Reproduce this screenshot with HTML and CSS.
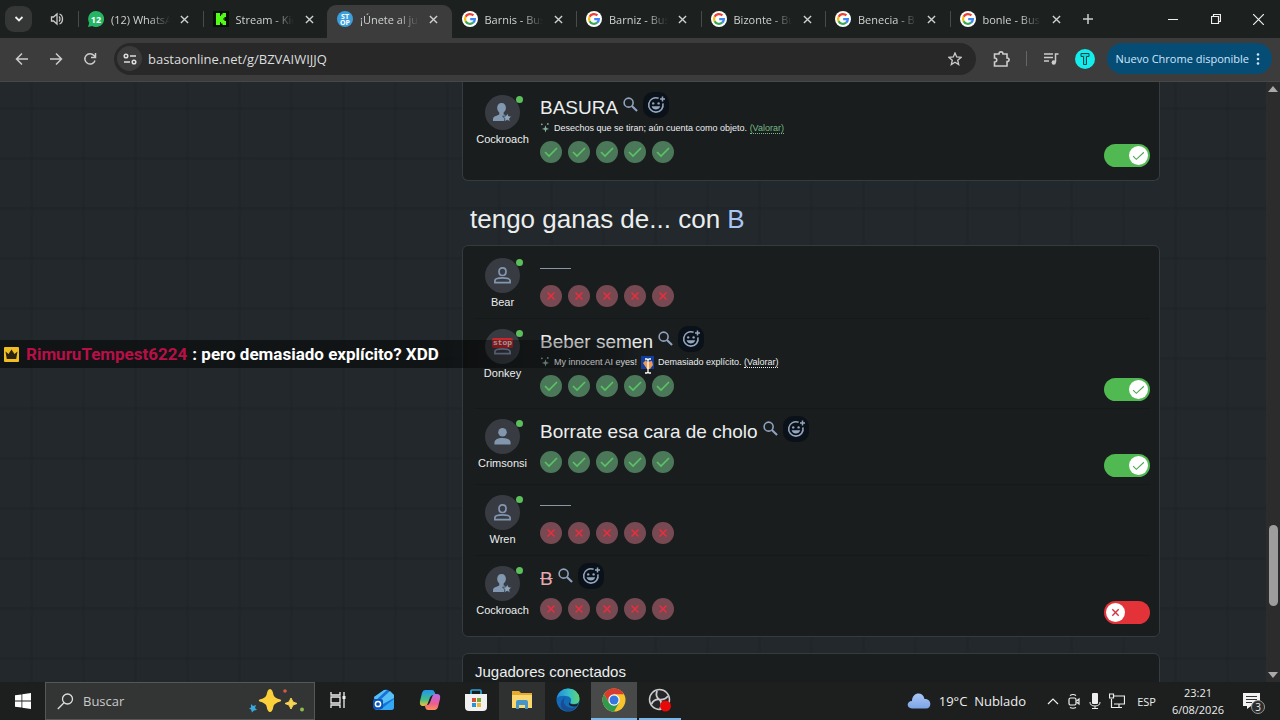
FILE: index.html
```
<!DOCTYPE html>
<html lang="es">
<head>
    <meta charset="UTF-8">
    <meta name="viewport" content="width=device-width, initial-scale=1.0">
    <link rel="stylesheet" href="styles.css">
    <title>¡Únete al juego!</title>
</head>
<body>
    <svg class="sprite" aria-hidden="true">
        <symbol id="close" viewBox="0 0 10 10"><path d="M1 1l8 8M9 1l-8 8" stroke="currentColor" stroke-width="1.5" fill="none"/></symbol>
        <symbol id="google" viewBox="0 0 16 16">
            <circle cx="8" cy="8" r="8" fill="#fff"/>
            <g fill="none" stroke-width="2.2">
                <path d="M11.4 4.4A4.9 4.9 0 0 0 3.6 5.8" stroke="#ea4335"/>
                <path d="M3.6 5.8a4.9 4.9 0 0 0 0 4.4" stroke="#fbbc05"/>
                <path d="M3.6 10.2a4.9 4.9 0 0 0 7.5 1.5" stroke="#34a853"/>
                <path d="M11.1 11.7A4.9 4.9 0 0 0 12.9 8.1H8.2" stroke="#4285f4"/>
            </g>
        </symbol>
        <symbol id="vote-yes" viewBox="0 0 22 22"><circle cx="11" cy="11" r="11" fill="#4b7859"/><path d="M5 11l4 4 8-8" fill="none" stroke="#5bc464" stroke-width="1.6"/></symbol>
        <symbol id="vote-no" viewBox="0 0 22 22"><circle cx="11" cy="11" r="11" fill="#774952"/><path d="M7.5 7.5l7 7M14.5 7.5l-7 7" fill="none" stroke="#e52f3c" stroke-width="1.7"/></symbol>
        <symbol id="search" viewBox="0 0 16 16"><circle cx="6" cy="6" r="4.8" fill="none" stroke="currentColor" stroke-width="1.7"/><path d="M9.500 9.500l5.500 5.500" stroke="currentColor" stroke-width="2.200"/></symbol>
        <symbol id="react" viewBox="0 0 20 20">
            <path d="M12.6 3.3A7.2 7.2 0 1 0 16.9 8.4" fill="none" stroke="currentColor" stroke-width="1.6"/>
            <path d="M16.500 1.500v5M14 4h5" stroke="currentColor" stroke-width="1.5"/>
            <circle cx="7.2" cy="8.4" r="1.2" fill="currentColor"/><circle cx="12.6" cy="8.4" r="1.2" fill="currentColor"/>
            <path d="M5.6 11.2h8.6c-.7 2.3-2.3 3.3-4.3 3.3s-3.6-1-4.3-3.3z" fill="currentColor"/>
        </symbol>
        <symbol id="sparkle" viewBox="0 0 12 12"><path d="M6 3l1 3 3 1-3 1-1 3-1-3-3-1 3-1z" fill="currentColor"/><circle cx="2" cy="2" r="1" fill="currentColor"/><circle cx="8.500" cy="1.500" r="1" fill="currentColor"/></symbol>
        <symbol id="user-outline" viewBox="0 0 20 20"><g fill="none" stroke="#8296b3" stroke-width="1.8"><path d="M10 2c2.300 0 3.700 1.600 3.700 3.800S12.300 10 10 10 6.300 8 6.300 5.800 7.700 2 10 2z"/><path d="M2 17.500v-2c0-2 4-3 8-3s8 1 8 3v2z"/></g></symbol>
        <symbol id="user-solid" viewBox="0 0 20 20"><g fill="#8296ad"><circle cx="10" cy="5.500" r="4.500"/><path d="M1.500 18.500v-2c0-3 3-5 8.500-5s8.500 2 8.500 5v2z"/></g></symbol>
        <symbol id="user-star" viewBox="0 0 20 20"><path d="M9 0c3 0 4.600 2.200 4.600 5 0 2-1 4-2.400 5v2l2.800 1-1 6H0V17c0-3 3.500-3.500 6.600-5v-2C5.400 9 4.400 7 4.400 5 4.400 2.200 6 0 9 0z" fill="#8198b0"/><path d="M15 10.500l1.500 3.100 3.400.4-2.500 2.300.7 3.500-3.100-1.700-3.100 1.700.7-3.500-2.500-2.300 3.400-.4z" fill="#8da6bc" stroke="#383c42" stroke-width=".9"/></symbol>
    </svg>

    <header class="tab-bar">
        <div class="tab-tools">
            <button class="tab-search" aria-label="Buscar pestañas"><svg width="10" height="10" viewBox="0 0 10 10"><path d="M1.500 3L5 6.500 8.500 3" fill="none" stroke="#eee" stroke-width="1.800"/></svg></button>
            <svg class="speaker" width="14" height="14" viewBox="0 0 14 14"><g fill="none" stroke="#ccc" stroke-width="1.300"><path d="M1.500 5v4h2l3.500 3V2L3.500 5z"/><path d="M9 4.500c1.300 1 1.300 4 0 5M9.500 2c4 1.500 4 8.500 0 10"/></g></svg>
        </div>
        <nav class="tabs">
            <div class="tab"><svg class="favicon" viewBox="0 0 16 16"><path d="M8 0a8 8 0 1 1-3.800 15L0 16l1.200-4A8 8 0 0 1 8 0z" fill="#25b565"/><text x="8" y="11.500" class="badge-text">12</text></svg><a href="#">(12) WhatsA</a><button class="tab-close" aria-label="Cerrar"><svg><use href="#close"/></svg></button></div>
            <div class="tab"><svg class="favicon" viewBox="0 0 16 16"><path d="M0 0h16v16H0z" fill="#071007"/><path d="M3 2h4v3h1V3.500h1.500V2H13v4h-1.500v1.500H10v1h1.500V10H13v4H9.500v-1.500H8V11H7v3H3z" fill="#53fc18"/></svg><a href="#">Stream - Kic</a><button class="tab-close" aria-label="Cerrar"><svg><use href="#close"/></svg></button></div>
            <div class="tab active"><svg class="favicon" viewBox="0 0 16 16"><circle cx="8" cy="8" r="8" fill="#3c9fdd"/><text x="8" y="7.500" class="stop-text">ST</text><text x="8" y="14" class="stop-text">OP</text></svg><a href="#">¡Únete al ju</a><button class="tab-close" aria-label="Cerrar"><svg><use href="#close"/></svg></button></div>
            <div class="tab"><svg class="favicon"><use href="#google"/></svg><a href="#">Barnis - Bus</a><button class="tab-close" aria-label="Cerrar"><svg><use href="#close"/></svg></button></div>
            <div class="tab"><svg class="favicon"><use href="#google"/></svg><a href="#">Barniz - Bus</a><button class="tab-close" aria-label="Cerrar"><svg><use href="#close"/></svg></button></div>
            <div class="tab"><svg class="favicon"><use href="#google"/></svg><a href="#">Bizonte - Bu</a><button class="tab-close" aria-label="Cerrar"><svg><use href="#close"/></svg></button></div>
            <div class="tab"><svg class="favicon"><use href="#google"/></svg><a href="#">Benecia - B</a><button class="tab-close" aria-label="Cerrar"><svg><use href="#close"/></svg></button></div>
            <div class="tab"><svg class="favicon"><use href="#google"/></svg><a href="#">bonle - Bus</a><button class="tab-close" aria-label="Cerrar"><svg><use href="#close"/></svg></button></div>
        </nav>
        <div class="window-tools">
            <button class="new-tab" aria-label="Nueva pestaña"><svg width="10" height="10" viewBox="0 0 10 10"><path d="M5 0v10M0 5h10" stroke="#ccc" stroke-width="1.500"/></svg></button>
            <button class="window-button" aria-label="Minimizar"><svg width="10" height="10" viewBox="0 0 10 10"><path d="M0 5.500h10" stroke="#eee"/></svg></button>
            <button class="window-button" aria-label="Restaurar"><svg width="10" height="10" viewBox="0 0 10 10"><path d="M.5 2.500h7v7h-7zM2.500 2.500v-2h7v7h-2" fill="none" stroke="#eee" stroke-width="1.200"/></svg></button>
            <button class="window-button" aria-label="Cerrar ventana"><svg width="11" height="11" viewBox="0 0 10 10"><path d="M0 0l10 10M10 0L0 10" stroke="#eee" stroke-width="1.100"/></svg></button>
        </div>
    </header>

    <div class="toolbar">
        <button class="nav-button" aria-label="Atrás"><svg width="14" height="14" viewBox="0 0 14 14"><path d="M13 7H2M7 1.500L1.500 7 7 12.500" fill="none" stroke="#ccc" stroke-width="1.500"/></svg></button>
        <button class="nav-button" aria-label="Adelante"><svg width="14" height="14" viewBox="0 0 14 14"><path d="M1 7h11M7 1.500L12.500 7 7 12.500" fill="none" stroke="#ccc" stroke-width="1.500"/></svg></button>
        <button class="nav-button" aria-label="Recargar"><svg width="14" height="14" viewBox="0 0 14 14"><path d="M12 8.500A5.200 5.200 0 1 1 11 3.500l1.300 1.500M12.500 1v4.500H8" fill="none" stroke="#ccc" stroke-width="1.500"/></svg></button>
        <div class="address-bar">
            <button class="site-info" aria-label="Información del sitio"><svg width="14" height="14" viewBox="0 0 14 14"><g fill="none" stroke="#ddd" stroke-width="1.500"><circle cx="3" cy="4" r="1.800"/><path d="M7 4h6M1 10h6"/><circle cx="11" cy="10" r="1.800"/></g></svg></button>
            <input class="address" type="text" aria-label="Dirección" value="bastaonline.net/g/BZVAIWIJJQ">
            <button class="star" aria-label="Favorito"><svg width="14" height="14" viewBox="0 0 14 14"><path d="M7 1l1.700 4 4.300.4-3.300 2.800 1 4.300L7 10.200l-3.700 2.300 1-4.300L1 5.400 5.300 5z" fill="none" stroke="#ccc" stroke-width="1.300"/></svg></button>
        </div>
        <div class="extensions">
            <button class="plain" aria-label="Extensiones"><svg width="18" height="18" viewBox="0 0 18 18"><path d="M2.500 4H7c0-2.800 4-2.800 4 0h4v4c2.800 0 2.800 3.500 0 3.500V16H2.500v-4c3 0 3-4 0-4z" fill="none" stroke="#ccc" stroke-width="1.600"/></svg></button>
            <span class="divider"></span>
            <button class="plain" aria-label="Multimedia"><svg width="16" height="14" viewBox="0 0 16 14"><path d="M1 2h9M1 5.500h9M1 9h5M15.500 2H12.500v8" fill="none" stroke="#ccc" stroke-width="1.500"/><circle cx="10.800" cy="10.500" r="2.200" fill="#ccc"/></svg></button>
            <button class="plain profile" aria-label="Perfil"><svg width="20" height="20" viewBox="0 0 20 20"><circle cx="10" cy="10" r="10" fill="#15ecec"/><path d="M6 4.500h8v3h-2.500v8h-3v-8H6z" fill="#19d4d6" stroke="#08494d" stroke-width="1"/></svg></button>
            <button class="update">Nuevo Chrome disponible <svg width="4" height="12" viewBox="0 0 4 12"><circle cx="2" cy="1.500" r="1.300"/><circle cx="2" cy="6" r="1.300"/><circle cx="2" cy="10.500" r="1.300"/></svg></button>
        </div>
    </div>

    <div class="page">
        <main class="game">
            <div class="results">
                <section class="card card-first">
                    <div class="row">
                        <div class="player"><span class="avatar"><svg><use href="#user-star"/></svg></span><span>Cockroach</span></div>
                        <div class="answer">
                            <div class="word"><span>BASURA</span><a href="#" class="lookup" aria-label="Buscar"><svg><use href="#search"/></svg></a><button class="react" aria-label="Reaccionar"><svg><use href="#react"/></svg></button></div>
                            <p class="comment"><svg><use href="#sparkle"/></svg><span>Desechos que se tiran; aún cuenta como objeto. <a href="#" class="rate">(Valorar)</a></span></p>
                            <div class="votes"><svg><use href="#vote-yes"/></svg><svg><use href="#vote-yes"/></svg><svg><use href="#vote-yes"/></svg><svg><use href="#vote-yes"/></svg><svg><use href="#vote-yes"/></svg></div>
                        </div>
                        <label class="toggle"><input type="checkbox" aria-label="Aceptar BASURA" checked><svg viewBox="0 0 12 12"><path d="M1 6.500l3 3L11 3"/></svg></label>
                    </div>
                </section>

                <h2>tengo ganas de... con <span>B</span></h2>

                <section class="card">
                    <div class="row">
                        <div class="player"><span class="avatar"><svg><use href="#user-outline"/></svg></span><span>Bear</span></div>
                        <div class="answer">
                            <div class="word blank"></div>
                            <div class="votes"><svg><use href="#vote-no"/></svg><svg><use href="#vote-no"/></svg><svg><use href="#vote-no"/></svg><svg><use href="#vote-no"/></svg><svg><use href="#vote-no"/></svg></div>
                        </div>
                    </div>
                    <div class="row">
                        <div class="player"><span class="avatar"><svg><use href="#user-outline"/></svg><b class="stop">stop</b></span><span>Donkey</span></div>
                        <div class="answer">
                            <div class="word"><span>Beber semen</span><a href="#" class="lookup" aria-label="Buscar"><svg><use href="#search"/></svg></a><button class="react" aria-label="Reaccionar"><svg><use href="#react"/></svg></button></div>
                            <p class="comment"><svg><use href="#sparkle"/></svg><span>My innocent AI eyes!</span>
                                <span class="selected"><svg viewBox="0 0 14 20"><path d="M2 7l3-3 1 2 5-1 1 4-3 4H6z" fill="#e89a57"/><path d="M4 3h2l1 1 1-1h2M7 4v12M4 17h2l1-1 1 1h2" fill="none" stroke="#fff" stroke-width="1.300"/></svg></span>
                                <span>Demasiado explícito. <a href="#" class="rate white">(Valorar)</a></span></p>
                            <div class="votes"><svg><use href="#vote-yes"/></svg><svg><use href="#vote-yes"/></svg><svg><use href="#vote-yes"/></svg><svg><use href="#vote-yes"/></svg><svg><use href="#vote-yes"/></svg></div>
                        </div>
                        <label class="toggle"><input type="checkbox" aria-label="Aceptar respuesta de Donkey" checked><svg viewBox="0 0 12 12"><path d="M1 6.500l3 3L11 3"/></svg></label>
                    </div>
                    <div class="row">
                        <div class="player"><span class="avatar"><svg><use href="#user-solid"/></svg></span><span>Crimsonsi</span></div>
                        <div class="answer">
                            <div class="word"><span>Borrate esa cara de cholo</span><a href="#" class="lookup" aria-label="Buscar"><svg><use href="#search"/></svg></a><button class="react" aria-label="Reaccionar"><svg><use href="#react"/></svg></button></div>
                            <div class="votes"><svg><use href="#vote-yes"/></svg><svg><use href="#vote-yes"/></svg><svg><use href="#vote-yes"/></svg><svg><use href="#vote-yes"/></svg><svg><use href="#vote-yes"/></svg></div>
                        </div>
                        <label class="toggle"><input type="checkbox" aria-label="Aceptar respuesta de Crimsonsi" checked><svg viewBox="0 0 12 12"><path d="M1 6.500l3 3L11 3"/></svg></label>
                    </div>
                    <div class="row">
                        <div class="player"><span class="avatar"><svg><use href="#user-outline"/></svg></span><span>Wren</span></div>
                        <div class="answer">
                            <div class="word blank"></div>
                            <div class="votes"><svg><use href="#vote-no"/></svg><svg><use href="#vote-no"/></svg><svg><use href="#vote-no"/></svg><svg><use href="#vote-no"/></svg><svg><use href="#vote-no"/></svg></div>
                        </div>
                    </div>
                    <div class="row">
                        <div class="player"><span class="avatar"><svg><use href="#user-star"/></svg></span><span>Cockroach</span></div>
                        <div class="answer">
                            <div class="word"><s>B</s><a href="#" class="lookup" aria-label="Buscar"><svg><use href="#search"/></svg></a><button class="react" aria-label="Reaccionar"><svg><use href="#react"/></svg></button></div>
                            <div class="votes"><svg><use href="#vote-no"/></svg><svg><use href="#vote-no"/></svg><svg><use href="#vote-no"/></svg><svg><use href="#vote-no"/></svg><svg><use href="#vote-no"/></svg></div>
                        </div>
                        <label class="toggle"><input type="checkbox" aria-label="Aceptar B"><svg viewBox="0 0 12 12"><path d="M2.500 2.500l7 7M9.500 2.500l-7 7"/></svg></label>
                    </div>
                </section>

                <section class="card connected">
                    <h3>Jugadores conectados</h3>
                </section>
            </div>
        </main>
        <div class="scrollbar">
            <svg width="10" height="6" viewBox="0 0 10 6"><path d="M0 6l5-6 5 6z" fill="#aaa"/></svg>
            <div class="track"><div class="thumb"></div></div>
            <svg width="10" height="6" viewBox="0 0 10 6"><path d="M0 0l5 6 5-6z" fill="#aaa"/></svg>
        </div>
        <div class="chat-message">
            <svg width="15" height="15" viewBox="0 0 15 15"><rect width="15" height="15" rx="1" fill="#f0bd22"/><path d="M1.500 4.500L4.500 7l3-4.500 3 4.500 3-2.500-1.300 7.500H2.800z" fill="#2a2210"/></svg>
            <b class="chat-user">RimuruTempest6224</b>
            <b>: pero demasiado explícito? XDD</b>
        </div>
    </div>

    <footer class="taskbar">
        <button class="start" aria-label="Inicio"><svg width="16" height="16" viewBox="0 0 16 16"><path d="M0 2.300L6.500 1.400v6.200H0zM7.300 1.300L16 0v7.600H7.300zM0 8.400h6.500v6.200L0 13.700zM7.300 8.400H16V16l-8.700-1.300z" fill="#fff"/></svg></button>
        <div class="search-box">
            <svg width="17" height="17" viewBox="0 0 17 17"><circle cx="10.500" cy="6" r="5" fill="none" stroke="#ddd" stroke-width="1.300"/><path d="M7 9.800L.8 16" stroke="#ddd" stroke-width="1.300"/></svg>
            <input type="text" aria-label="Buscar" placeholder="Buscar">
            <svg width="58" height="26" viewBox="0 0 58 26"><path d="M22 1q2.500 0 3.500 6 1 3 7 4.500 1.500 1 0 2-6 1.500-7 4.500-1 6-3.500 6t-3.500-6q-1-3-7-4.500-1.500-1 0-2 6-1.500 7-4.500 1-6 3.500-6z" fill="#fbd03b"/><path d="M43 10l2 4 4 1.500-4 1.500-2 4-2-4-4-1.500 4-1.500z" fill="#f7d354" stroke="#f7d354"/><path d="M3 16l2 2 3-1-1 3 2 2-3 .500-2 2-1-3-2-1 2-1z" fill="#39a9dc"/><circle cx="37" cy="3" r="1.800" fill="#d75b3b"/><circle cx="54" cy="21.500" r="2" fill="#8bbf4d"/></svg>
        </div>
        <nav class="apps">
            <button class="app" aria-label="Vista de tareas"><svg width="16" height="16" viewBox="0 0 16 16"><path d="M1 0v3h9V0M1 5h9v6H1zM1 16v-3h9v3M14 0v16" fill="none" stroke="#eee" stroke-width="1.300"/><path d="M12.500 4h3v3h-3z" fill="#eee"/></svg></button>
            <button class="app" aria-label="Outlook"><svg width="22" height="22" viewBox="0 0 22 22"><path d="M1 8L11 1q2-1 4 0l6 5v12q0 3-3 3H3q-2 0-2-3z" fill="#1672d7"/><path d="M1 8L11 1l3 0L2 12zM5 13L17 2l4 4v3L10 15z" fill="#58bff5"/><path d="M7 21l14-11v8q0 3-3 3z" fill="#34a8f2"/><rect y="10" width="10" height="10" rx="2" fill="#0a54b5"/><circle cx="5" cy="15" r="2.600" fill="none" stroke="#fff" stroke-width="1.500"/></svg></button>
            <button class="app" aria-label="Copilot"><svg width="22" height="22" viewBox="0 0 22 22"><defs><linearGradient id="cop1" x2="0" y2="1"><stop stop-color="#2195f2"/><stop offset=".6" stop-color="#43bd88"/><stop offset="1" stop-color="#f2c334"/></linearGradient><linearGradient id="cop2" x2="0" y2="1"><stop stop-color="#b66bec"/><stop offset=".6" stop-color="#ef5c91"/><stop offset="1" stop-color="#f99354"/></linearGradient></defs><path d="M6 1h7q2 0 2.500 2L17 6h-3q-2 0-3 2.500L8.500 15q-.800 2-3 2H4Q0 17 1 12L3 4q.800-3 3-3z" fill="url(#cop1)"/><path d="M16 21H9q-2 0-2.500-2L5.500 16H8q2 0 3-2.500L13.500 7q.800-2 3-2H18q4 0 3 5l-2 8q-.800 3-3 3z" fill="url(#cop2)"/></svg></button>
            <button class="app" aria-label="Microsoft Store"><svg width="22" height="22" viewBox="0 0 22 22"><path d="M6 6V2q0-1 1-1h8q1 0 1 1v4" fill="none" stroke="#2ba5d9" stroke-width="1.700"/><path d="M0 5h22v13q0 4-4 4H4q-4 0-4-4z" fill="#f1f1f1"/><path d="M7 9h4v4H7z" fill="#d94f38"/><path d="M12 9h4v4h-4z" fill="#76a832"/><path d="M7 14h4v4H7z" fill="#2894d1"/><path d="M12 14h4v4h-4z" fill="#efb631"/></svg></button>
            <button class="app open" aria-label="Explorador"><svg width="22" height="20" viewBox="0 0 22 20"><path d="M1 1h7l2 2h11v15H1z" fill="#e6aa30"/><path d="M1 5h20v13H1z" fill="#fbd770"/><path d="M5 19v-7q0-2 2-2h8q2 0 2 2v7h-3v-4H8v4z" fill="#4695ca"/></svg></button>
            <button class="app" aria-label="Edge"><svg width="24" height="24" viewBox="0 0 24 24"><defs><linearGradient id="edge"><stop stop-color="#2588db"/><stop offset=".55" stop-color="#35bfc7"/><stop offset="1" stop-color="#61d46c"/></linearGradient></defs><circle cx="12" cy="12" r="11.500" fill="#126bb8"/><path d="M.7 10Q3 1 12 .5 23 1 23.500 11q0 5-6 5-4 0-2.500-2.500Q16 8.500 10 8 4 7 .7 10z" fill="url(#edge)"/><path d="M9.500 9q-4 5 .5 9 4.500 3.500 10.500 1-4 4.500-10 4Q3 20.500 5 14q1-3 4.500-5z" fill="#1a4c91"/><path d="M13.500 14q0 2.500 4 2.500 3 0 4.500-1l-1 2.500q-6 1.500-8-1.500-.500-1.500.5-2.500z" fill="#1e1f1f"/></svg></button>
            <button class="app current" aria-label="Chrome"><svg width="24" height="24" viewBox="0 0 24 24"><circle cx="12" cy="12" r="11.500" fill="#f7c52b"/><path d="M2 6.300A11.500 11.500 0 0 1 22 6.300H12L7 15z" fill="#d93b30"/><path d="M2 6.300A11.500 11.500 0 0 0 12 23.500L17 15H7z" fill="#2d9a50"/><circle cx="12" cy="12" r="5.700" fill="#fff"/><circle cx="12" cy="12" r="4.500" fill="#3478df"/></svg></button>
            <button class="app running" aria-label="OBS"><svg width="24" height="24" viewBox="0 0 24 24"><circle cx="11.500" cy="11.500" r="10" fill="#25262a" stroke="#ccc" stroke-width="1.500"/><path d="M9 3q-2 6 2.500 8.500Q17 12 20 8M11.500 11.500Q6 11 3.500 16M11.500 11.500Q15 15 12 21" fill="none" stroke="#ccc" stroke-width="1.800"/><circle cx="17.500" cy="18" r="5.500" fill="#e90808"/></svg></button>
        </nav>
        <div class="tray">
            <svg width="24" height="16" viewBox="0 0 24 16"><defs><linearGradient id="cloud" x2="0" y2="1"><stop stop-color="#a9c6f7"/><stop offset="1" stop-color="#7da4e6"/></linearGradient></defs><path d="M5 15.500C-1 15.500-.5 8 5 8 5-1 16-2 17.500 6 25 5.500 25 15.500 19 15.500z" fill="url(#cloud)"/></svg>
            <span class="weather">19°C&nbsp; Nublado</span>
            <svg class="chevron" width="12" height="8" viewBox="0 0 12 8"><path d="M1 7l5-5 5 5" fill="none" stroke="#eee" stroke-width="1.200"/></svg>
            <svg width="14" height="16" viewBox="0 0 14 16"><g fill="none" stroke="#eee" stroke-width="1.200"><rect x="2" y="5" width="7" height="7" rx="1.500"/><path d="M9.500 8l2.500-2v5l-2.500-2M3 2.500q3-2 6 0M3 14.500q3 1.500 6 0"/></g></svg>
            <svg width="12" height="16" viewBox="0 0 12 16"><rect x="3" width="6" height="11" rx="1" fill="#eee"/><path d="M1 9q0 4 5 4t5-4M6 13v3M3 15.500h6" fill="none" stroke="#eee"/></svg>
            <svg width="16" height="16" viewBox="0 0 16 16"><path d="M4 3h11.500v8H5M2.500 6v8.500H13M10 11v3.500M.5 1h4v4h-4z" fill="none" stroke="#eee" stroke-width="1.200"/></svg>
            <span class="language">ESP</span>
            <time class="clock">23:21<br>6/08/2026</time>
            <span class="notifications"><svg width="18" height="16" viewBox="0 0 18 16"><path d="M0 0h17v13H8l-4 3v-3H0z" fill="#f2f2f2"/><path d="M3 3.500h11M3 6.500h11M3 9.500h6" stroke="#333"/></svg><span>3</span></span>
        </div>
    </footer>
</body>
</html>
```
FILE: styles.css
```
* {
    box-sizing: border-box;
}

body {
    font-family: "Liberation Sans", Arial, sans-serif;
    margin: 0;
    height: 100vh;
    display: flex;
    flex-direction: column;
    overflow: hidden;
    background-color: #1b1d1d;
    color: #eceeee;
}

button {
    font-family: inherit;
    background: none;
    border: none;
    padding: 0;
    color: inherit;
    display: flex;
    align-items: center;
    justify-content: center;
}

a {
    color: inherit;
    text-decoration: none;
}

svg {
    flex-shrink: 0;
}

.sprite {
    position: absolute;
    width: 0;
    height: 0;
}

/* browser */
.tab-bar, .toolbar, .taskbar {
    font-family: "Open Sans", "Noto Sans", sans-serif;
    font-size: 11px;
    flex-shrink: 0;
    display: flex;
    align-items: center;
}

.tab-bar {
    height: 38px;
    background-color: #1c201e;
}

.tab-tools {
    width: 78px;
    display: flex;
    align-items: center;
    padding-left: 5px;
    gap: 18px;
}

.tab-search {
    width: 27px;
    height: 26px;
    border-radius: 9px;
    background-color: #353737;
}

.tabs {
    flex: 1;
    display: flex;
    align-self: stretch;
    min-width: 0;
}

.tab {
    flex: 1;
    min-width: 0;
    display: flex;
    align-items: center;
    padding: 0 13px 0 9px;
    margin-top: 5px;
    height: 28px;
    color: #d0d2d2;
    border-left: 1px solid #414444;
    border-image: linear-gradient(transparent 25%, #484b4b 25%, #484b4b 75%, transparent 75%) 1;
}

.tab.active, .tab.active + .tab {
    border-color: transparent;
    border-image: none;
}

.tab.active {
    height: 33px;
    padding-bottom: 5px;
    background-color: #3c3c3c;
    border-radius: 9px 9px 0 0;
}

.favicon {
    width: 16px;
    height: 16px;
    margin-right: 7px;
}

.badge-text, .stop-text {
    font-weight: bold;
    font-size: 9px;
    text-anchor: middle;
    fill: #fff;
}

.stop-text {
    font-size: 7px;
}

.tab a {
    flex: 1;
    min-width: 0;
    white-space: nowrap;
    -webkit-mask-image: linear-gradient(90deg, #000 65%, transparent);
    mask-image: linear-gradient(90deg, #000 65%, transparent);
}

.tab-close {
    width: 10px;
    height: 10px;
    margin-left: 10px;
}

.tab-close svg {
    width: 9px;
    height: 9px;
}

.window-tools {
    width: 206px;
    display: flex;
    align-items: center;
}

.new-tab {
    width: 28px;
    height: 28px;
    margin-right: auto;
}

.window-button {
    width: 43px;
    height: 28px;
}

.toolbar {
    height: 44px;
    background-color: #3c3c3c;
    border-bottom: 1px solid #454849;
    padding: 0 8px 2px 5px;
}

.nav-button {
    width: 34px;
    height: 30px;
}

.address-bar {
    flex: 1;
    height: 32px;
    margin-left: 7px;
    padding: 0 14px 0 3px;
    border-radius: 16px;
    background-color: #282828;
    display: flex;
    align-items: center;
}

.site-info {
    width: 25px;
    height: 25px;
    border-radius: 50%;
    background-color: #3b3b3b;
}

.address {
    flex: 1;
    font-family: inherit;
    font-size: 13px;
    color: #dcdede;
    background: none;
    border: none;
    padding: 0 6px;
    outline: none;
}

.extensions {
    display: flex;
    align-items: center;
    padding-left: 16px;
}

.divider {
    width: 1px;
    height: 15px;
    margin: 0 16px;
    background-color: #666;
}

.profile {
    margin: 0 12px 0 16px;
}

.update {
    height: 31px;
    padding: 0 12px 0 9px;
    gap: 7px;
    border-radius: 16px;
    background-color: #064d76;
    color: #cfe7fb;
    font-size: 11px;
    white-space: nowrap;
}

.update svg {
    fill: #cfe7fb;
}

/* game page */
.page {
    flex: 1;
    min-height: 0;
    display: flex;
    position: relative;
    background-color: #22282b;
    background-image:
        repeating-linear-gradient(0deg, transparent 0 22px, rgba(14, 24, 29, .12) 22px 25px, transparent 25px 50px),
        repeating-linear-gradient(90deg, transparent 0 30px, rgba(14, 24, 29, .1) 30px 33px, transparent 33px 52px);
}

.game {
    flex: 1;
    max-width: 1054px;
    margin: 0 auto;
    padding-left: 356px;
    overflow: hidden;
}

.card {
    background-color: #191d1e;
    border: 1px solid #353c40;
    border-radius: 6px;
    padding: 1px 9px 5px 12px;
}

.card-first {
    border-top: none;
    border-radius: 0 0 6px 6px;
    padding: 2px 9px 6px 12px;
}

.row {
    display: flex;
    gap: 10px;
    padding: 8px 0 7px;
}

.row + .row {
    background-image: linear-gradient(#14191c, #14191c);
    background-size: 100% 1px;
    background-repeat: no-repeat;
}

.player {
    width: 55px;
    padding-top: 3px;
    display: flex;
    flex-direction: column;
    align-items: center;
    font-size: 11px;
    line-height: 18px;
}

.avatar {
    width: 35px;
    height: 35px;
    border-radius: 50%;
    background-color: #383c42;
    display: flex;
    align-items: center;
    justify-content: center;
    position: relative;
}

.avatar svg {
    width: 19px;
    height: 19px;
}

/* online mark */
.avatar::after {
    content: "";
    position: absolute;
    top: 1px;
    right: -3px;
    width: 7px;
    height: 7px;
    border-radius: 50%;
    background-color: #5cbf5c;
}

.stop {
    position: absolute;
    top: 9px;
    left: 7px;
    width: 21px;
    border-radius: 2px;
    background-color: #c9252b;
    font-family: "Liberation Mono", monospace;
    font-size: 8px;
    line-height: 10px;
    text-align: center;
}

.answer {
    flex: 1;
    min-width: 0;
    padding-bottom: 4px;
}

.word {
    display: flex;
    align-items: flex-start;
    height: 29px;
    font-size: 19px;
    line-height: 32px;
}

.word.blank {
    width: 31px;
    height: 14px;
    margin-bottom: 16px;
    border-bottom: 1px solid #8797a5;
}

.word s {
    color: #e5a9b3;
}

.lookup {
    width: 16px;
    margin: 5px 0 0 5px;
    line-height: 0;
    color: #8fa3c0;
}

.lookup svg {
    width: 15px;
    height: 15px;
}

.react {
    width: 26px;
    height: 26px;
    margin-left: 4px;
    border-radius: 10px;
    background-color: #0b1118;
    color: #93a6c0;
}

.react svg {
    width: 20px;
    height: 20px;
}

.comment {
    margin: 0;
    height: 14px;
    display: flex;
    align-items: center;
    gap: 3px;
    font-size: 9px;
    white-space: nowrap;
}

.comment > svg {
    width: 11px;
    height: 12px;
    color: #87ad9b;
}

.rate {
    color: #76bb85;
    border-bottom: 1px dotted #76bb85;
}

.rate.white {
    color: #eceeee;
    border-color: #eceeee;
}

.selected {
    width: 13px;
    height: 13px;
    margin: 0 1px;
    background-color: #113d9c;
}

.selected svg {
    width: 14px;
    height: 20px;
}

.votes {
    display: flex;
    gap: 6px;
    margin-top: 6px;
}

.votes svg {
    width: 22px;
    height: 22px;
}

.toggle {
    align-self: flex-end;
    position: relative;
    width: 46px;
    height: 23px;
}

.toggle input {
    appearance: none;
    margin: 0;
    width: 46px;
    height: 23px;
    border-radius: 12px;
    background-color: #e33338;
}

.toggle input:checked {
    background-color: #51b951;
}

.toggle svg {
    position: absolute;
    top: 2px;
    left: 2px;
    width: 19px;
    height: 19px;
    padding: 4px;
    border-radius: 50%;
    background-color: #fff;
    fill: none;
    stroke: #d6333c;
    stroke-width: 1.5;
}

.toggle input:checked + svg {
    left: 25px;
    padding: 3px;
    stroke: #4ba653;
    stroke-width: 1;
}

h2 {
    margin: 0;
    padding: 0 8px;
    font-size: 26px;
    font-weight: normal;
    line-height: 76px;
    height: 64px;
}

h2 span {
    color: #a9c5f5;
}

.connected {
    margin-top: 16px;
    padding-top: 8px;
    height: 120px;
}

h3 {
    margin: 0;
    font-size: 15px;
    font-weight: normal;
    line-height: 20px;
}

.scrollbar {
    width: 14px;
    padding: 4px 0;
    background-color: #2c2c2c;
    display: flex;
    flex-direction: column;
    align-items: center;
}

.track {
    flex: 1;
    width: 9px;
    display: flex;
    flex-direction: column;
    justify-content: flex-end;
}

.thumb {
    height: 81px;
    margin-bottom: 66px;
    border-radius: 5px;
    background-color: #9d9d9d;
}

/* stream chat over the page */
.chat-message {
    position: absolute;
    top: 258px;
    left: 0;
    width: 50%;
    height: 28px;
    padding-left: 4px;
    display: flex;
    align-items: center;
    font-family: Roboto, sans-serif;
    font-size: 17px;
    color: #fff;
    background-image: linear-gradient(90deg, rgba(0, 0, 0, .5) 70%, rgba(0, 0, 0, .3) 82%, rgba(0, 0, 0, .2) 96%, transparent);
}

.chat-user {
    margin: 0 5px 0 7px;
    color: #b80f47;
}

/* taskbar */
.taskbar {
    height: 38px;
    background-color: #1d1e1e;
}

.start {
    width: 45px;
    height: 38px;
}

.search-box {
    width: 270px;
    height: 38px;
    padding: 0 8px 0 11px;
    display: flex;
    align-items: center;
    background-color: #333434;
    border: 1px solid #565757;
}

.search-box input {
    flex: 1;
    min-width: 0;
    padding: 0 9px;
    border: none;
    background: none;
    font-family: inherit;
    font-size: 13px;
}

.search-box input::placeholder {
    color: #c9c9c9;
}

.apps {
    display: flex;
}

.app {
    width: 46px;
    height: 38px;
    border-bottom: 2px solid transparent;
}

.app.open {
    background-color: #2f3030;
}

.app.current {
    background-color: #484949;
    border-color: #76b9ed;
}

.app.running {
    border-image: linear-gradient(90deg, transparent 8%, #76b9ed 8%, #76b9ed 92%, transparent 92%) 2;
}

.tray {
    margin-left: auto;
    padding-right: 19px;
    display: flex;
    align-items: center;
    gap: 8px;
    white-space: nowrap;
}

.weather {
    font-size: 13px;
}

.chevron {
    margin-left: 13px;
}

.language {
    margin-left: 4px;
}

.clock {
    margin-left: 8px;
    text-align: center;
    line-height: 17px;
}

.notifications {
    position: relative;
    margin-left: 11px;
    height: 16px;
    line-height: 0;
}

.notifications span {
    position: absolute;
    top: 7px;
    left: 8px;
    width: 14px;
    height: 14px;
    border: 1px solid #999;
    border-radius: 50%;
    background-color: #2b2c2c;
    font-size: 10px;
    line-height: 12px;
    text-align: center;
}
```
